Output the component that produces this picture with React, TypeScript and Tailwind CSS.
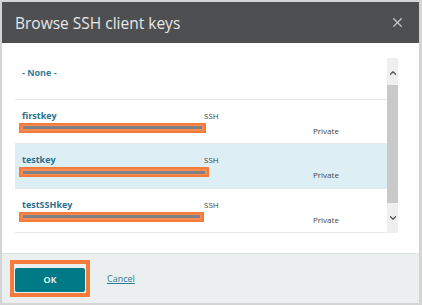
import { X, ChevronUp, ChevronDown } from "lucide-react";

const keys = [
  { name: "firstkey", bar: 187, selected: false },
  { name: "testkey", bar: 190, selected: true },
  { name: "testSSHkey", bar: 185, selected: false },
];

function Redacted({ width }: { width: number }) {
  return (
    <div
      className="h-[10px] border-2 border-[#f47b3a] bg-[#f58b55] flex items-center px-[2px]"
      style={{ width }}
    >
      <div className="h-[3px] w-full bg-[#7d8084]" />
    </div>
  );
}

export default function App() {
  return (
    <div className="w-[422px] h-[305px] bg-[#d4d4d4] p-[2px] pr-[3px] font-['Open_Sans',sans-serif]">
      <div className="h-full flex flex-col bg-white">
        <div className="h-[41px] bg-[#4e4f51] flex items-center justify-between pl-[13px] pr-[14px]">
          <span className="text-[15.5px] text-[#e8e8e8] leading-none pt-[2px]">Browse SSH client keys</span>
          <X className="w-[15px] h-[15px] text-[#c4c6c8]" strokeWidth={2} />
        </div>
        <div className="flex-1 flex pt-[15px] pl-[13px] pr-[21px]">
          <div className="flex-1 h-[175px] flex flex-col">
            <div className="h-[42px] border-b border-[#e6ebec] pt-[9px] pl-[7px]">
              <span className="block text-[9px] font-bold text-[#2e7d9a] leading-[12px]">- None -</span>
            </div>
            {keys.map((k) => (
              <div
                key={k.name}
                className={`h-[45px] border-b border-[#e6ebec] flex pl-[4px] ${k.selected ? "bg-[#ddeef5]" : "bg-white"}`}
              >
                <div className="w-[185px] flex flex-col pt-[10px]">
                  <span className="text-[9px] font-bold text-[#2a6f8c] leading-[12px] pl-[3px]">{k.name}</span>
                  <div className="mt-[1px]">
                    <Redacted width={k.bar} />
                  </div>
                </div>
                <div className="w-[109px] pt-[10px] text-[8px] text-[#444] leading-[12px]">SSH</div>
                <div className="pt-[25px] text-[8px] text-[#444] leading-[12px]">Private</div>
              </div>
            ))}
          </div>
          <div className="w-[11px] h-[175px] bg-[#efefef] flex flex-col items-center">
            <div className="h-[27px] pt-[3px] flex items-center justify-center">
              <ChevronUp className="w-[10px] h-[10px] text-[#555]" strokeWidth={3} />
            </div>
            <div className="w-full h-[118px] bg-[#c9c9c9]" />
            <div className="flex-1 flex items-center justify-center">
              <ChevronDown className="w-[10px] h-[10px] text-[#555]" strokeWidth={3} />
            </div>
          </div>
        </div>
        <div className="h-[50px] bg-[#eceff0] border-t border-[#dfe3e4] flex items-center pl-[8px] gap-[17px]">
          <div className="border-[4px] border-[#f47b3a] p-[1px]">
            <button className="w-[70px] h-[24px] bg-[#007a87] rounded-[2px] text-white text-[9px] font-semibold">
              OK
            </button>
          </div>
          <a className="text-[9px] text-[#2a7e96] underline">Cancel</a>
        </div>
      </div>
    </div>
  );
}
